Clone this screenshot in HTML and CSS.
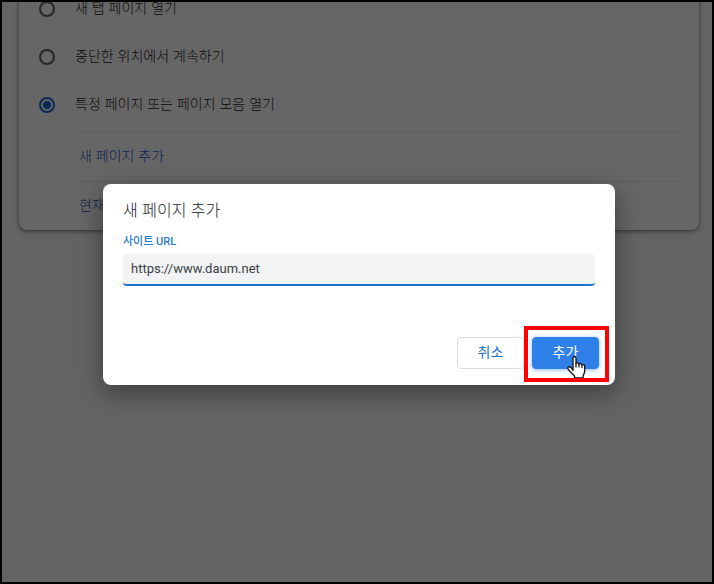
FILE: index.html
```html
<!DOCTYPE html>
<html lang="ko">
<head>
<meta charset="utf-8">
<title>새 페이지 추가</title>
<link rel="stylesheet" href="styles.css">
</head>
<body>
<div class="window">
  <main class="settings">
    <section class="card">
      <label class="option"><input class="radio" type="radio" name="startup"><span class="option-text">새 탭 페이지 열기</span></label>
      <label class="option"><input class="radio" type="radio" name="startup"><span class="option-text">중단한 위치에서 계속하기</span></label>
      <label class="option"><input class="radio" type="radio" name="startup" checked><span class="option-text">특정 페이지 또는 페이지 모음 열기</span></label>
      <ul class="links">
        <li class="link-row"><a class="link" href="#">새 페이지 추가</a></li>
        <li class="link-row"><a class="link" href="#">현재</a></li>
      </ul>
    </section>
  </main>
  <div class="backdrop">
    <form class="dialog" role="dialog" aria-labelledby="dialog-title">
      <h1 class="title" id="dialog-title">새 페이지 추가</h1>
      <label class="field-label" for="url">사이트 URL</label>
      <input class="field" id="url" type="text" value="https://www.daum.net">
      <div class="actions">
        <button class="button" type="button">취소</button>
        <div class="primary">
          <button class="button button-add" type="button">추가</button>
          <svg class="cursor" viewBox="0 0 20 24" aria-hidden="true">
            <path d="M7 15.500V3c0-2 3-2 3 0v5.500c.5-1 3-.8 3 .8.5-1 3-.8 3 .8.6-.9 2.700-.5 2.700 1.200v5.200c0 2-1.700 3.200-1.700 5V23H8.500v-2L4 16.500c-1-1.300-2.300-2.500-2.300-3.500 0-1.400 2-1.700 3.300-.5z" fill="#fff" stroke="#111" stroke-width="1.300" stroke-linejoin="round"/>
            <path d="M10 8v4.500M13 9v3.500M16 10v3" fill="none" stroke="#111" stroke-width="1.200"/>
          </svg>
          <div class="highlight"></div>
        </div>
      </div>
    </form>
  </div>
</div>
</body>
</html>
```
FILE: styles.css
```css
* {
  box-sizing: border-box;
}

body {
  margin: 0;
  font-family: Roboto, "Noto Sans CJK KR", sans-serif;
  font-size: 14px;
  color: #202124;
}

.window {
  position: relative;
  height: 100vh;
  border: 2px solid #000;
  background: #fafafa;
  overflow: hidden;
}

.settings {
  padding: 0 13px 0 17px;
}

.card {
  margin-top: -17px;
  padding: 0 20px;
  border-radius: 8px;
  background: #fff;
  box-shadow: 0 1px 3px rgba(60, 64, 67, 0.5), 0 2px 6px rgba(60, 64, 67, 0.3);
}

.option {
  display: flex;
  align-items: center;
  gap: 20px;
  height: 48px;
}

.option-text,
.link {
  padding-bottom: 4px;
  font-family: "Noto Sans CJK KR", sans-serif;
  font-weight: 300;
}

.radio {
  appearance: none;
  display: grid;
  place-items: center;
  width: 16px;
  height: 16px;
  margin: 0;
  border: 2px solid #5f6368;
  border-radius: 50%;
}

.radio:checked {
  border-color: #1a66cc;
}

.radio:checked::before {
  content: "";
  width: 8px;
  height: 8px;
  border-radius: 50%;
  background: #1a66cc;
}

.links {
  margin: 3px 0 0 40px;
  padding: 0;
  list-style: none;
}

.link-row {
  display: flex;
  align-items: center;
  height: 49px;
  border-top: 1px solid #ececec;
}

.link {
  color: #1a55c0;
  text-decoration: none;
}

.backdrop {
  position: absolute;
  inset: 0;
  display: flex;
  align-items: center;
  justify-content: center;
  padding: 0 16px 16px 20px;
  background: rgba(0, 0, 0, 0.6);
}

.dialog {
  width: 100%;
  max-width: 512px;
  padding: 16px 16px 16px 20px;
  border-radius: 8px;
  background: #fff;
  box-shadow: 0 8px 24px 2px rgba(0, 0, 0, 0.35);
}

.title {
  margin: 0;
  font-family: "Noto Sans CJK KR", sans-serif;
  font-size: 16px;
  font-weight: 300;
  line-height: 18px;
}

.field-label {
  display: block;
  margin: 16px 0 4px;
  font-size: 11px;
  font-weight: 500;
  line-height: 16px;
  color: #2878cc;
}

.field {
  display: block;
  width: calc(100% - 4px);
  height: 32px;
  padding: 0 8px;
  border: 0;
  border-bottom: 2px solid #1a73d0;
  border-radius: 4px;
  outline: 0;
  background: #f1f3f4;
  font-family: Roboto, sans-serif;
  font-size: 13px;
  color: #3c4043;
}

.actions {
  display: flex;
  justify-content: flex-end;
  gap: 8px;
  margin-top: 51px;
}

.button {
  height: 32px;
  min-width: 67px;
  padding: 0 16px 4px;
  border: 1px solid #dadce0;
  border-radius: 4px;
  background: #fff;
  font-family: "Noto Sans CJK KR", sans-serif;
  font-size: 14px;
  color: #1a73c8;
}

.primary {
  position: relative;
}

.button-add {
  display: block;
  border-color: #2f80e9;
  background: #2f80e9;
  color: #fff;
  box-shadow: 0 1px 4px rgba(26, 115, 232, 0.5);
}

.highlight {
  position: absolute;
  inset: -11px -10px -13px -8px;
  border: 4px solid #fe0000;
  pointer-events: none;
}

.cursor {
  position: absolute;
  left: 34px;
  top: 18px;
  width: 20px;
  height: 24px;
  pointer-events: none;
}
```
